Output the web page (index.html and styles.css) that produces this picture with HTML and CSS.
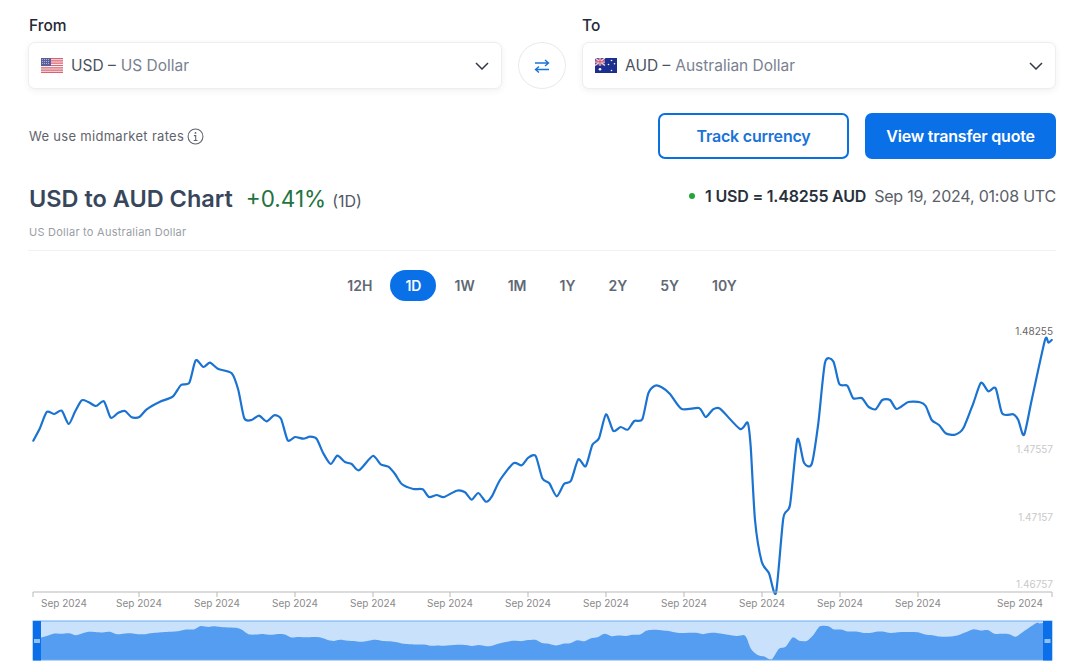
FILE: index.html
```html
<!DOCTYPE html>
<html lang="en">
<head>
<meta charset="utf-8">
<title>USD to AUD Chart</title>
<link rel="stylesheet" href="styles.css">
</head>
<body>
<div class="converter">
	<div class="field-label">From</div>
	<div></div>
	<div class="field-label field-to">To</div>

	<div class="select">
		<svg class="flag" viewBox="0 0 22 15">
			<rect width="22" height="15" fill="#f2f2f4"/>
			<path d="M0 0h22v1.2H0zM0 2.3h22v1.2H0zM0 4.6h22v1.2H0zM0 6.9h22v1.2H0zM0 9.2h22v1.2H0zM0 11.5h22v1.2H0zM0 13.8h22V15H0z" fill="#e0606c"/>
			<rect width="10" height="8" fill="#5d5f9c"/>
			<path d="M1 1.5h8M1 3.5h8M1 5.5h8" stroke="#c5c6dd" stroke-width=".8" stroke-dasharray="1 1"/>
		</svg>
		<span class="code">USD –</span>
		<span class="name">US Dollar</span>
		<svg class="chevron" viewBox="0 0 14 8"><path d="M1 1l6 6 6-6"/></svg>
	</div>

	<div class="swap">
		<svg viewBox="0 0 16 14"><path d="M1 4h13.5M11 1l3.5 3-3.500 3M15 10.500H1.500M5 7.500l-3.500 3 3.500 3"/></svg>
	</div>

	<div class="select">
		<svg class="flag" viewBox="0 0 22 15">
			<rect width="22" height="15" fill="#1c2f8f"/>
			<rect width="10" height="7.500" fill="#4a4f9f"/>
			<path d="M0 0l10 7.500M10 0L0 7.500" stroke="#f0d5dc" stroke-width="1.300"/>
			<path d="M5 0v7.500M0 3.750h10" stroke="#f0d5dc" stroke-width="2.200"/>
			<path d="M5 0v7.500M0 3.750h10" stroke="#e0485c" stroke-width="1.100"/>
			<g fill="#fff">
				<circle cx="5" cy="11.300" r="1.300"/>
				<circle cx="16.500" cy="2.500" r=".8"/>
				<circle cx="13.500" cy="6.500" r=".8"/>
				<circle cx="19.500" cy="5.800" r=".8"/>
				<circle cx="16.500" cy="12.500" r=".8"/>
			</g>
		</svg>
		<span class="code">AUD –</span>
		<span class="name">Australian Dollar</span>
		<svg class="chevron" viewBox="0 0 14 8"><path d="M1 1l6 6 6-6"/></svg>
	</div>
</div>

<div class="actions">
	<div class="note">
		We use midmarket rates
		<svg class="info" viewBox="0 0 16 16">
			<circle cx="8" cy="8" r="7"/>
			<path d="M6.500 7.200H8.200V11.800M6.300 11.800h3.600"/>
			<circle class="dot" cx="8" cy="4.600" r=".9"/>
		</svg>
	</div>
	<div class="buttons">
		<a class="btn btn-line">Track currency</a>
		<a class="btn btn-fill">View transfer quote</a>
	</div>
</div>

<div class="summary">
	<div class="summary-left">
		<h1>USD to AUD Chart</h1>
		<span class="change">+0.41%</span>
		<span class="period">(1D)</span>
	</div>
	<div class="rate">
		<i class="live"></i>
		<b>1 USD = 1.48255 AUD</b>
		<span>Sep 19, 2024, 01:08 UTC</span>
	</div>
</div>
<div class="subtitle">US Dollar to Australian Dollar</div>

<ul class="ranges">
	<li>12H</li>
	<li class="select-range">1D</li>
	<li>1W</li>
	<li>1M</li>
	<li>1Y</li>
	<li>2Y</li>
	<li>5Y</li>
	<li>10Y</li>
</ul>

<svg id="chart" class="chart" viewBox="29 320 1027 344">
	<path id="line" class="line"/>
	<text class="y-now" x="1053" y="335">1.48255</text>
	<text class="y-label" x="1053" y="453">1.47557</text>
	<text class="y-label" x="1053" y="521">1.47157</text>
	<text class="y-label" x="1053" y="588">1.46757</text>

	<path class="axis" d="M33 597v-5h1019v5M139 592v5M217 592v5M295 592v5M373 592v5M450 592v5M528 592v5M606 592v5M684 592v5M762 592v5M840 592v5M918 592v5"/>
	<g class="x-labels">
		<text x="64" y="607">Sep 2024</text>
		<text x="139" y="607">Sep 2024</text>
		<text x="217" y="607">Sep 2024</text>
		<text x="295" y="607">Sep 2024</text>
		<text x="373" y="607">Sep 2024</text>
		<text x="450" y="607">Sep 2024</text>
		<text x="528" y="607">Sep 2024</text>
		<text x="606" y="607">Sep 2024</text>
		<text x="684" y="607">Sep 2024</text>
		<text x="762" y="607">Sep 2024</text>
		<text x="840" y="607">Sep 2024</text>
		<text x="918" y="607">Sep 2024</text>
		<text x="1020" y="607">Sep 2024</text>
	</g>

	<rect class="nav-bg" x="33" y="621" width="1019" height="39"/>
	<path id="navArea" class="nav-area"/>
	<rect class="nav-frame" x="33" y="621" width="1019" height="39"/>
	<rect class="nav-handle" x="33" y="621" width="8" height="39.500"/>
	<rect class="nav-handle" x="1043" y="621" width="9" height="39.500"/>
	<rect class="nav-grip" x="34" y="639" width="6" height="4"/>
	<rect class="nav-grip" x="1044.500" y="639" width="6" height="4"/>
</svg>

<script type="text/javascript">
	var rates = [33.3,440.7, 40,428, 46.7,412, 54.3,414, 61.7,410.7, 68.7,424, 75,411.7, 81.7,400.3, 88.3,402, 96,406, 104,401.3, 110.7,417.7, 118.3,412.7, 125,411, 131.7,417.3, 139.3,417, 146.7,409.3, 160,401.7, 172.7,396.7, 181,385, 189.3,382.7, 195.7,360.3, 203.3,367, 210,362.7, 218.3,369, 231.7,373.3, 238.3,390, 244.3,418.3, 251.7,420, 259,415.7, 266.7,421.3, 274,415.3, 281,418.7, 287.7,440.3, 295,437, 303.3,438.7, 310,436.7, 316.7,439, 323.3,453.3, 330.7,464, 337.3,455.7, 345,462, 351.7,464, 359,470.3, 372.7,456, 380.7,464.3, 388.3,466.7, 395,474, 401.7,484, 413.3,489, 422.7,489.3, 429,497, 436.7,495, 444,497, 456.7,490.7, 465,492.3, 471.7,499.7, 478.3,493, 486,501.7, 491.7,496.7, 500,480, 513.3,463.3, 521.7,465.3, 528.3,457.7, 535.7,456, 542.3,478.3, 549.3,483.3, 556.7,496.3, 564,484, 571,480.7, 578.3,459.3, 585.7,466.3, 592.3,445, 599,438.3, 606,414.3, 613.3,431, 620.7,427, 627.7,429.7, 634.3,421, 642.3,419.3, 648.3,393.3, 655,385.7, 661.7,387.3, 670,394, 681.7,409, 699,408, 705.7,417, 712.7,409.7, 720,408.7, 740,429, 747.7,422.7, 750.7,446.7, 755,520, 761.7,561.7, 769,573.3, 776,592.7, 783.3,518.3, 790,505, 797.3,439.3, 804,462.7, 811.7,464, 818.3,423.3, 825,362.7, 833.3,361.3, 839.3,384, 847.3,385.7, 853.3,398.3, 861.7,398, 868.3,406.7, 875.7,409.3, 882.3,400, 890,400, 896.7,409, 908.3,402, 920,402.3, 925.7,406, 931.7,420, 939,425, 945.7,433.3, 955,434.7, 963.3,428.3, 973.3,403.3, 981,382.7, 988.3,391.3, 995.7,388.3, 1002.3,413.7, 1013.3,414.3, 1018.3,420, 1024,435, 1031.7,400, 1045,340, 1048.3,342.7, 1051.7,340];

	// smooth curve through the points
	function curve(pts) {
		var d = 'M' + pts[0] + ' ' + pts[1];
		for (var i = 0; i < pts.length - 2; i += 2) {
			var x0 = pts[i - 2] === undefined ? pts[i] : pts[i - 2],
				y0 = pts[i - 1] === undefined ? pts[i + 1] : pts[i - 1],
				x3 = pts[i + 4] === undefined ? pts[i + 2] : pts[i + 4],
				y3 = pts[i + 5] === undefined ? pts[i + 3] : pts[i + 5],
				k = 0.12;
			d += 'C' + (pts[i] + (pts[i + 2] - x0) * k) + ' ' + (pts[i + 1] + (pts[i + 3] - y0) * k) + ' ' +
				(pts[i + 2] - (x3 - pts[i]) * k) + ' ' + (pts[i + 3] - (y3 - pts[i + 1]) * k) + ' ' +
				pts[i + 2] + ' ' + pts[i + 3];
		}
		return d;
	}

	document.getElementById('line').setAttribute('d', curve(rates));

	var nav = [];
	for (var i = 0; i < rates.length; i += 2) {
		nav.push(41 + (rates[i] - 33.3) * 1002 / 1018.4);
		nav.push(626 + (rates[i + 1] - 360.3) * 0.144);
	}
	document.getElementById('navArea').setAttribute('d', curve(nav) + 'L1052 622L1052 660L33 660L33 636Z');
</script>
</body>
</html>
```

FILE: styles.css
```css
*{
	padding: 0;
	margin: 0;
	box-sizing: border-box;
}
body{
	padding: 17px 24px 0 28px;
	font-family: Inter, "Liberation Sans", sans-serif;
	color: #2f3a4d;
	background: #fff;
	overflow: hidden;
}
ul,li{
	list-style: none;
}

/* currency selects */
.converter{
	display: grid;
	grid-template-columns: 1fr 48px 1fr;
	column-gap: 16px;
}
.field-label{
	height: 25px;
	padding-left: 1px;
	font-size: 15.500px;
	line-height: 18px;
	font-weight: 500;
	color: #1f2937;
}
.field-to{
	padding-left: 0;
}
.select{
	display: flex;
	align-items: center;
	height: 47px;
	padding: 0 12px;
	font-size: 15.500px;
	background: #fff;
	border: 1px solid #eceef1;
	border-radius: 7px;
	box-shadow: 0 2px 6px rgba(40,50,70,.07);
}
.flag{
	width: 22px;
	height: 15px;
	margin-right: 8px;
}
.code{
	margin-right: 5px;
	color: #4a5261;
}
.name{
	color: #7a8190;
}
.chevron{
	width: 14px;
	height: 8px;
	margin-left: auto;
	fill: none;
	stroke: #333a45;
	stroke-width: 1.5;
}
.swap{
	display: flex;
	align-items: center;
	justify-content: center;
	height: 47px;
	border: 1px solid #e8eaee;
	border-radius: 50%;
}
.swap svg{
	width: 16px;
	height: 14px;
	fill: none;
	stroke: #1a73d9;
	stroke-width: 1.4;
}

/* note and buttons */
.actions{
	display: flex;
	align-items: center;
	justify-content: space-between;
	margin-top: 24px;
	padding-left: 1px;
}
.note{
	display: flex;
	align-items: center;
	gap: 3px;
	font-size: 13px;
	letter-spacing: .3px;
	color: #5f646c;
}
.info{
	width: 17px;
	height: 17px;
	fill: none;
	stroke: #5f646c;
	stroke-width: 1;
}
.info .dot{
	fill: #5f646c;
	stroke: none;
}
.buttons{
	display: flex;
	gap: 16px;
}
.btn{
	width: 191px;
	height: 46px;
	font-size: 16px;
	line-height: 42px;
	font-weight: 600;
	letter-spacing: -.2px;
	text-align: center;
	border: 2px solid #0a6fdf;
	border-radius: 7px;
}
.btn-line{
	color: #1a73d9;
	background: #fff;
}
.btn-fill{
	color: #fff;
	background: #0a70e8;
	border-color: #0a70e8;
}

/* title row */
.summary{
	display: flex;
	align-items: center;
	justify-content: space-between;
	margin-top: 25px;
	padding-left: 1px;
}
.summary-left{
	display: flex;
	align-items: baseline;
}
h1{
	font-size: 23.500px;
	line-height: 30px;
	font-weight: 600;
	color: #38465c;
}
.change{
	margin-left: 13px;
	font-size: 22.500px;
	color: #23733f;
}
.period{
	margin-left: 6px;
	font-size: 16px;
	color: #4f5763;
}
.rate{
	display: flex;
	align-items: center;
	margin-bottom: 6px;
	font-size: 16px;
	letter-spacing: -.2px;
	color: #5a6068;
}
.rate b{
	font-weight: 600;
	color: #28303c;
	margin-right: 8px;
}
.live{
	width: 6px;
	height: 6px;
	margin-right: 10px;
	border-radius: 50%;
	background: #22a53a;
}
.subtitle{
	height: 26px;
	margin-top: 11px;
	padding-left: 1px;
	font-size: 11px;
	line-height: 14px;
	letter-spacing: .25px;
	color: #9a9ea5;
	border-bottom: 1px solid #f1f2f4;
}

/* range tabs */
.ranges{
	display: flex;
	justify-content: center;
	gap: 3px;
	margin-top: 19px;
}
.ranges li{
	height: 31px;
	padding: 0 15px;
	font-size: 14px;
	line-height: 31px;
	font-weight: 600;
	text-align: center;
	color: #5f6875;
	border-radius: 16px;
}
.ranges li.select-range{
	color: #fff;
	background: #0a70e8;
}

/* chart */
.chart{
	display: block;
	width: 1027px;
	height: 344px;
	margin: 19px 0 0 1px;
	font-family: Inter, "Liberation Sans", sans-serif;
}
.line{
	fill: none;
	stroke: #1a73d0;
	stroke-width: 2.200;
	stroke-linejoin: round;
	stroke-linecap: round;
}
.y-now,.y-label{
	font-size: 10px;
	text-anchor: end;
}
.y-now{
	fill: #666;
}
.y-label{
	fill: #c9c9c9;
}
.axis{
	fill: none;
	stroke: #b9b9b9;
	stroke-width: 1;
}
.x-labels text{
	font-size: 10px;
	text-anchor: middle;
	fill: #8a8a8a;
}
.nav-bg{
	fill: #c9e1fb;
}
.nav-area{
	fill: #549df0;
}
.nav-frame{
	fill: none;
	stroke: #6aaef5;
	stroke-width: 1;
}
.nav-handle{
	fill: #0a6fe8;
}
.nav-grip{
	fill: #8fc2f7;
}
```
